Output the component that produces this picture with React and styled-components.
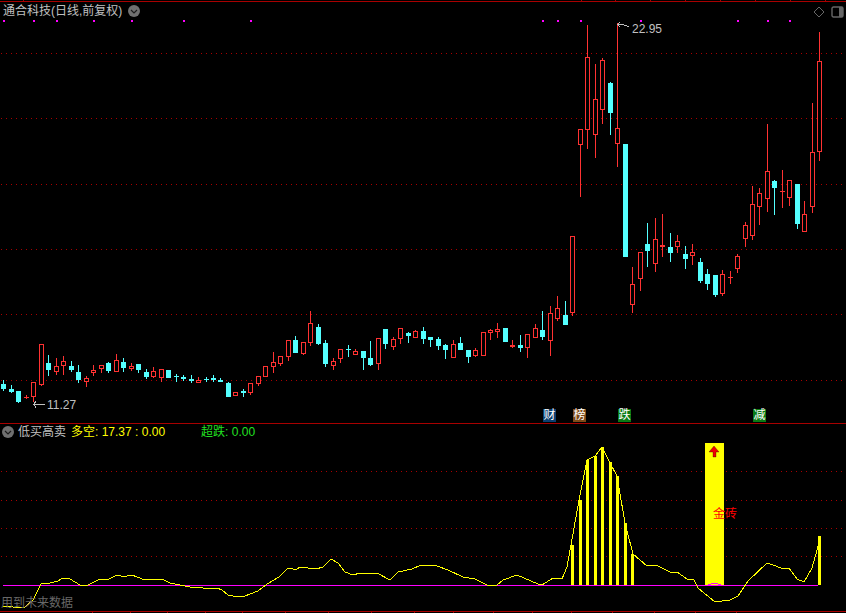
import React from "react";
import styled, { createGlobalStyle } from "styled-components";

const RED = "#ff3232";
const CYAN = "#54ffff";
const GRID = "#a80000";
const AXIS = "#a80000";
const YELLOW = "#ffff00";
const MAGENTA = "#ff00ff";
const FONT = '"Liberation Sans", "Noto Sans CJK SC", sans-serif';

// type, wick top, body top, body bottom, wick bottom (page pixels)
const candles = [
  ["c", 380, 384, 389, 391], ["c", 385, 389, 392, 393], ["c", 391, 391, 402, 403], ["r", 395, 397, 397, 399],
  ["r", 382, 382, 397, 402], ["r", 344, 344, 385, 386], ["c", 355, 363, 370, 376], ["r", 358, 366, 372, 375],
  ["r", 356, 361, 366, 375], ["c", 361, 366, 370, 372], ["c", 365, 372, 380, 383], ["r", 376, 378, 382, 387],
  ["r", 365, 370, 373, 376], ["r", 365, 365, 369, 373], ["c", 362, 363, 371, 373], ["r", 354, 360, 372, 372],
  ["c", 358, 362, 368, 372], ["r", 363, 366, 369, 371], ["c", 364, 364, 370, 373], ["c", 369, 372, 377, 379],
  ["r", 367, 371, 377, 378], ["r", 369, 369, 378, 382], ["c", 370, 370, 378, 378], ["c", 374, 376, 377, 382],
  ["c", 375, 377, 379, 381], ["c", 375, 379, 381, 383], ["r", 377, 380, 383, 383], ["c", 377, 379, 380, 382],
  ["c", 375, 378, 380, 382], ["c", 378, 380, 382, 382], ["c", 382, 383, 397, 397], ["r", 392, 392, 396, 396],
  ["c", 389, 391, 393, 397], ["r", 383, 383, 393, 395], ["r", 376, 376, 384, 386], ["r", 366, 366, 377, 377],
  ["r", 352, 362, 367, 373], ["r", 356, 356, 364, 366], ["r", 340, 340, 357, 361], ["c", 336, 340, 353, 353],
  ["r", 342, 342, 354, 355], ["r", 311, 323, 343, 346], ["c", 324, 327, 344, 345], ["c", 340, 343, 364, 367],
  ["r", 358, 361, 366, 370], ["r", 349, 349, 359, 363], ["c", 345, 349, 350, 357], ["r", 349, 351, 355, 355],
  ["c", 351, 351, 358, 370], ["c", 341, 358, 365, 366], ["r", 338, 338, 364, 370], ["c", 329, 329, 344, 349],
  ["r", 337, 339, 347, 350], ["r", 328, 328, 339, 344], ["c", 332, 333, 336, 343], ["r", 330, 331, 338, 338],
  ["c", 327, 331, 339, 344], ["c", 337, 337, 340, 347], ["c", 337, 339, 346, 350], ["c", 344, 345, 350, 359],
  ["r", 340, 344, 358, 358], ["c", 337, 343, 350, 350], ["c", 350, 350, 357, 363], ["r", 348, 350, 356, 357],
  ["r", 332, 332, 356, 356], ["r", 329, 330, 333, 340], ["r", 323, 329, 332, 338], ["c", 328, 328, 342, 342],
  ["r", 340, 345, 347, 348], ["c", 335, 345, 348, 352], ["r", 334, 334, 348, 358], ["r", 324, 328, 338, 338],
  ["c", 311, 330, 337, 340], ["r", 306, 313, 341, 356], ["r", 296, 308, 319, 321], ["c", 301, 315, 325, 325],
  ["r", 236, 236, 313, 316], ["r", 129, 129, 145, 197], ["r", 25, 57, 130, 149], ["r", 64, 99, 135, 158],
  ["r", 58, 60, 110, 124], ["c", 82, 83, 113, 135], ["r", 23, 128, 144, 167], ["c", 144, 144, 257, 257],
  ["r", 267, 284, 305, 313], ["r", 252, 252, 279, 291], ["c", 223, 244, 251, 267], ["r", 218, 239, 264, 272],
  ["r", 214, 245, 247, 257], ["c", 233, 247, 253, 262], ["r", 235, 241, 247, 253], ["c", 246, 254, 259, 269],
  ["r", 244, 252, 256, 265], ["c", 258, 262, 281, 283], ["c", 269, 274, 284, 290], ["c", 275, 275, 295, 297],
  ["r", 270, 274, 294, 296], ["r", 271, 277, 277, 284], ["r", 254, 256, 269, 273], ["r", 222, 225, 239, 247],
  ["r", 186, 204, 236, 240], ["r", 188, 193, 207, 225], ["r", 124, 171, 199, 212], ["c", 180, 181, 188, 215],
  ["r", 170, 191, 191, 208], ["r", 180, 180, 198, 206], ["c", 184, 184, 224, 229], ["r", 201, 214, 232, 232],
  ["r", 103, 152, 207, 213], ["r", 32, 61, 152, 161],
];

const candleX = (i) => Math.floor(3.9 + 7.486 * i);

const topDots = [3, 33, 56, 93, 131, 183, 250, 542, 557, 580, 640, 737, 767, 789];
const topTicks = [23, 581, 615, 650, 685, 720, 755, 790, 825];
const bottomTicks = [92, 130, 167, 205, 242, 285, 328, 371, 414, 453, 493, 532, 571, 612, 654, 695, 736];

const signalBars = [
  [571, 545], [579, 500], [586, 460], [594, 456], [601, 447], [609, 462], [616, 476], [624, 523], [631, 554], [818, 536],
];

const flowPoints = [
  [3, 606], [13, 607], [18, 608], [25, 607], [33, 600], [41, 584], [50, 583], [58, 581], [63, 578], [70, 579], [80, 585],
  [88, 585], [100, 579], [109, 579], [117, 575], [121, 576], [127, 576], [132, 575], [137, 577], [145, 580], [150, 579],
  [162, 579], [170, 583], [180, 585], [185, 586], [190, 587], [202, 587], [203, 588], [217, 588], [222, 590], [228, 595],
  [233, 596], [245, 596], [250, 594], [258, 591], [267, 584], [279, 577], [288, 568], [293, 569], [297, 569], [300, 567],
  [308, 568], [316, 569], [323, 567], [331, 559], [338, 563], [345, 572], [353, 575], [360, 573], [377, 573], [390, 580],
  [398, 572], [412, 569], [421, 565], [437, 566], [448, 570], [463, 577], [475, 579], [487, 585], [497, 585], [503, 580],
  [517, 575], [538, 584], [542, 585], [553, 578], [562, 579], [567, 567], [571, 545], [579, 500], [587, 460], [595, 456],
  [602, 447], [610, 463], [617, 476], [625, 523], [633, 554], [647, 566], [656, 565], [670, 572], [677, 572], [687, 579],
  [694, 580], [698, 588], [715, 602], [722, 601], [730, 600], [738, 596], [748, 581], [767, 563], [773, 565], [781, 568],
  [789, 568], [797, 579], [804, 582], [812, 568], [819, 543],
].map((p) => p.join(",")).join(" ");

const GlobalStyle = createGlobalStyle`
  html, body {
    margin: 0;
    padding: 0;
    background: #000;
  }
`;

const Page = styled.div`
  width: 846px;
  height: 613px;
  display: flex;
  flex-direction: column;
  background: #000;
  overflow: hidden;
  font-family: ${FONT};
  font-size: 12px;
  line-height: 14px;
  color: #c0c0c0;
`;

const Ruler = styled.svg`
  display: block;
  flex: none;
`;

const Pane = styled.section`
  position: relative;
  flex: none;
  height: ${(p) => p.$height}px;
  border-top: ${(p) => (p.$divided ? `1px solid ${AXIS}` : "none")};
`;

const ChartSvg = styled.svg`
  display: block;
`;

const ChartText = styled.text`
  font-family: ${FONT};
  font-size: 12px;
  fill: ${(p) => p.$fill};
`;

const PaneHeader = styled.div`
  position: absolute;
  top: ${(p) => p.$top}px;
  left: ${(p) => p.$left}px;
  display: flex;
  align-items: center;
`;

const Title = styled.span`
  white-space: nowrap;
`;

const Legend = styled.span`
  color: ${(p) => p.$color};
  margin-left: ${(p) => p.$gap || 0}px;
  white-space: nowrap;
`;

const RoundIcon = styled.svg`
  display: block;
  flex: none;
  margin: ${(p) => p.$margin};
`;

const CornerTools = styled.div`
  position: absolute;
  top: 4px;
  right: 2px;
  display: flex;
  align-items: center;
  gap: 6px;
`;

const Badge = styled.span`
  position: absolute;
  left: ${(p) => p.$x}px;
  bottom: 1px;
  width: 13px;
  height: 13px;
  background: ${(p) => p.$bg};
  color: #fff;
  text-align: center;
  line-height: 13px;
`;

const Warning = styled.span`
  position: absolute;
  left: 1px;
  bottom: 1px;
  color: #686868;
  white-space: nowrap;
`;

const Chevron = ({ margin }) => (
  <RoundIcon $margin={margin} width="12" height="12" viewBox="0 0 12 12">
    <circle cx="6" cy="6" r="6" fill="#707070" />
    <path d="M3 5 L6 8 L9 5" fill="none" stroke="#1c1c1c" strokeWidth="1.2" />
  </RoundIcon>
);

const Candle = ({ data, index }) => {
  const [type, wickTop, bodyTop, bodyBottom, wickBottom] = data;
  const x = candleX(index);
  const color = type === "r" ? RED : CYAN;
  const height = Math.max(bodyBottom - bodyTop, 1);
  return (
    <g>
      <rect x={x} y={wickTop} width="1" height={wickBottom - wickTop} fill={color} />
      {type === "c" || height < 2 ? (
        <rect x={x - 2} y={bodyTop} width="5" height={height} fill={color} />
      ) : (
        <rect x={x - 1.5} y={bodyTop + 0.5} width="4" height={height - 1} fill="#000" stroke={color} strokeWidth="1" />
      )}
    </g>
  );
};

const GridLines = ({ rows }) =>
  rows.map((y) => (
    <line key={y} x1="1" y1={y + 0.5} x2="846" y2={y + 0.5} stroke={GRID} strokeWidth="1" strokeDasharray="1 4" />
  ));

export default function App() {
  return (
    <Page>
      <GlobalStyle />
      <Ruler width="846" height="2" viewBox="0 0 846 2" shapeRendering="crispEdges">
        <rect x="0" y="1" width="846" height="1" fill={AXIS} />
        {topTicks.map((x) => (
          <rect key={x} x={x} y="0" width="1" height="1" fill={AXIS} />
        ))}
      </Ruler>

      <Pane $height={421}>
        <ChartSvg width="846" height="421" viewBox="0 2 846 421">
          <g shapeRendering="crispEdges">
            <GridLines rows={[53, 118, 184, 249, 314, 380]} />
            {topDots.map((x) => (
              <rect key={x} x={x} y="20" width="2" height="2" fill={MAGENTA} />
            ))}
            {candles.map((c, i) => (
              <Candle key={i} data={c} index={i} />
            ))}
            <path d="M33.5 404.5H45M36 401.5L33.5 404.5L36 407.5" fill="none" stroke="#c0c0c0" strokeWidth="1" />
            <path d="M618 24.5L622 24.5L629 26.5M620 22L617.5 24.5L620 27" fill="none" stroke="#c0c0c0" strokeWidth="1" />
          </g>
          <ChartText x="47" y="409" $fill="#c0c0c0">11.27</ChartText>
          <ChartText x="632" y="33" $fill="#c0c0c0">22.95</ChartText>
        </ChartSvg>

        <PaneHeader $top={2} $left={3}>
          <Title>通合科技(日线,前复权)</Title>
          <Chevron margin="0 0 0 6px" />
        </PaneHeader>

        <CornerTools>
          <svg width="12" height="12" viewBox="0 0 12 12">
            <path d="M6 1L11 6L6 11L1 6Z" fill="none" stroke="#666" strokeWidth="1" />
          </svg>
          <svg width="13" height="12" viewBox="0 0 13 12">
            <rect x="1" y="1" width="11" height="10" rx="1.5" fill="none" stroke="#666" strokeWidth="1.4" />
            <rect x="8" y="1" width="4" height="10" fill="#666" />
          </svg>
        </CornerTools>

        <Badge $x={543} $bg="#0c3f70">财</Badge>
        <Badge $x={573} $bg="#7d4a18">榜</Badge>
        <Badge $x={618} $bg="#0a7a14">跌</Badge>
        <Badge $x={753} $bg="#0a7a14">减</Badge>
      </Pane>

      <Pane $height={187} $divided>
        <ChartSvg width="846" height="187" viewBox="0 424 846 187">
          <g shapeRendering="crispEdges">
            <GridLines rows={[471, 500, 528, 556]} />
            <rect x="705" y="443" width="19" height="142" fill={YELLOW} />
            {signalBars.map(([x, top]) => (
              <rect key={x} x={x} y={top} width="3" height={585 - top} fill={YELLOW} />
            ))}
            <rect x="3" y="585" width="815" height="1" fill={MAGENTA} />
            <path d="M708 585L712 583.5H716L721 585" fill="none" stroke={MAGENTA} strokeWidth="1" />
            <polyline points={flowPoints} fill="none" stroke={YELLOW} strokeWidth="1" />
          </g>
          <path d="M714 446L719 452H716V457H713V452H709Z" fill="#f00000" stroke="#000" strokeWidth="0.3" />
          <ChartText x="713" y="518" $fill="#ff0000">金砖</ChartText>
        </ChartSvg>

        <PaneHeader $top={1} $left={2}>
          <Chevron margin="0 4px 0 0" />
          <Title>低买高卖</Title>
          <Legend $color={YELLOW} $gap={5}>多空: 17.37 : 0.00</Legend>
          <Legend $color="#22e022" $gap={36}>超跌: 0.00</Legend>
        </PaneHeader>

        <Warning>用到未来数据</Warning>
      </Pane>

      <Ruler width="846" height="2" viewBox="0 0 846 2" shapeRendering="crispEdges">
        <rect x="0" y="0" width="846" height="1" fill={AXIS} />
        {bottomTicks.map((x) => (
          <rect key={x} x={x} y="1" width="1" height="1" fill={AXIS} />
        ))}
      </Ruler>
    </Page>
  );
}
